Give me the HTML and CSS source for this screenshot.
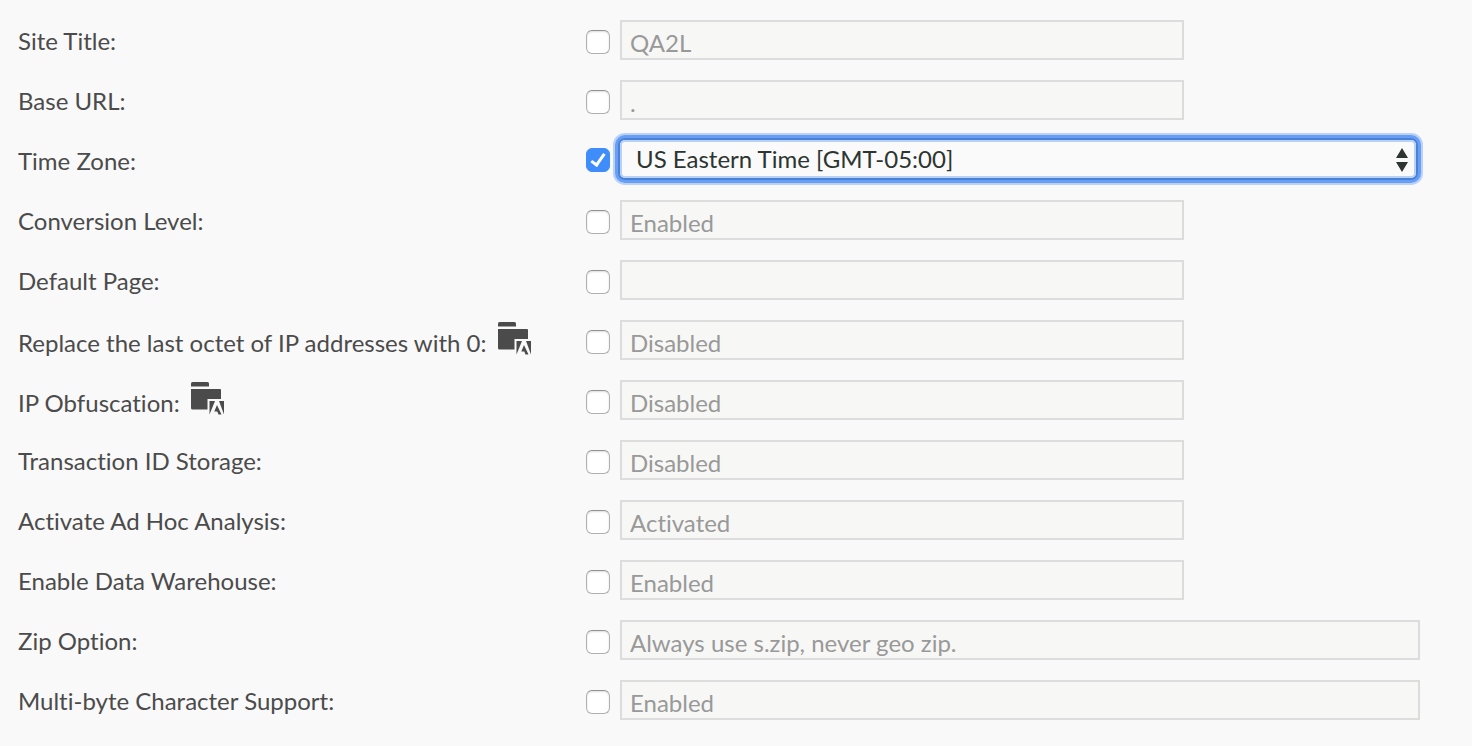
FILE: index.html
```html
<!DOCTYPE html>
<html lang="en">
<head>
    <meta charset="UTF-8">
    <meta name="viewport" content="width=device-width, initial-scale=1.0">
    <title>Report Suite Settings</title>
    <link rel="stylesheet" href="styles.css">
</head>
<body>
    <svg class="symbols">
        <symbol id="folder-icon" viewBox="0 0 34 34">
            <path d="M0 5.500V2.500Q0 1 1.500 1H16.500Q18 1 18 2.500V5.500Z"/>
            <path d="M0 8H29Q30 8 30 9V18H16.500V28.500H1.500Q0 28.500 0 27Z"/>
            <path d="M18.500 20H24L18.500 33.500ZM28 20H33V33.500ZM26 24L30.500 33.500H27.500L26.300 30.500H23.300Z"/>
        </symbol>
    </svg>
    <form class="settings">
        <div class="row">
            <label class="name" for="siteTitle">Site Title:</label>
            <input type="checkbox" aria-label="Edit site title">
            <input type="text" id="siteTitle" value="QA2L" disabled>
        </div>
        <div class="row">
            <label class="name" for="baseUrl">Base URL:</label>
            <input type="checkbox" aria-label="Edit base URL">
            <input type="text" id="baseUrl" value="." disabled>
        </div>
        <div class="row active">
            <label class="name" for="timeZone">Time Zone:</label>
            <input type="checkbox" aria-label="Edit time zone" checked>
            <div class="select">
                <select id="timeZone">
                    <option selected>US Eastern Time [GMT-05:00]</option>
                </select>
                <svg class="arrows" viewBox="0 0 12 24"><path d="M6 0L12 10H0ZM0 14H12L6 24Z"/></svg>
            </div>
        </div>
        <div class="row">
            <label class="name" for="conversion">Conversion Level:</label>
            <input type="checkbox" aria-label="Edit conversion level">
            <input type="text" id="conversion" value="Enabled" disabled>
        </div>
        <div class="row">
            <label class="name" for="defaultPage">Default Page:</label>
            <input type="checkbox" aria-label="Edit default page">
            <input type="text" id="defaultPage" value="" disabled>
        </div>
        <div class="row">
            <label class="name with-icon" for="octet">Replace the last octet of IP addresses with 0:
                <svg class="folder"><use href="#folder-icon"/></svg></label>
            <input type="checkbox" aria-label="Edit last octet">
            <input type="text" id="octet" value="Disabled" disabled>
        </div>
        <div class="row">
            <label class="name with-icon" for="obfuscation">IP Obfuscation:
                <svg class="folder"><use href="#folder-icon"/></svg></label>
            <input type="checkbox" aria-label="Edit IP obfuscation">
            <input type="text" id="obfuscation" value="Disabled" disabled>
        </div>
        <div class="row">
            <label class="name" for="transaction">Transaction ID Storage:</label>
            <input type="checkbox" aria-label="Edit transaction ID storage">
            <input type="text" id="transaction" value="Disabled" disabled>
        </div>
        <div class="row">
            <label class="name" for="adHoc">Activate Ad Hoc Analysis:</label>
            <input type="checkbox" aria-label="Edit ad hoc analysis">
            <input type="text" id="adHoc" value="Activated" disabled>
        </div>
        <div class="row">
            <label class="name" for="warehouse">Enable Data Warehouse:</label>
            <input type="checkbox" aria-label="Edit data warehouse">
            <input type="text" id="warehouse" value="Enabled" disabled>
        </div>
        <div class="row">
            <label class="name" for="zip">Zip Option:</label>
            <input type="checkbox" aria-label="Edit zip option">
            <input type="text" id="zip" class="wide" value="Always use s.zip, never geo zip." disabled>
        </div>
        <div class="row">
            <label class="name" for="multiByte">Multi-byte Character Support:</label>
            <input type="checkbox" aria-label="Edit multi-byte support">
            <input type="text" id="multiByte" class="wide" value="Enabled" disabled>
        </div>
    </form>
</body>
</html>
```
FILE: styles.css
```css
* {
    box-sizing: border-box;
}
body {
    font-family: Lato, "Open Sans", sans-serif;
    font-size: 24px;
    font-variant-ligatures: none;
    color: #4b4b4b;
    background-color: #f9f9f9;
    margin: 0;
}
.symbols {
    display: none;
}
.settings {
    display: flex;
    flex-direction: column;
    gap: 20px;
    padding: 20px 52px 20px 18px;
}
.row {
    display: grid;
    grid-template-columns: 568px 24px minmax(0, 1fr);
    align-items: center;
    height: 40px;
}
.name {
    line-height: 30px;
    padding-top: 2px;
    white-space: nowrap;
}
.with-icon {
    display: flex;
    align-items: center;
    gap: 11px;
    height: 40px;
    padding-top: 6px;
}
.folder {
    flex: none;
    width: 34px;
    height: 34px;
    margin-bottom: 10px;
    fill: #4b4b4b;
}
input[type="checkbox"] {
    appearance: none;
    width: 24px;
    height: 24px;
    margin: 4px 0 0;
    background-color: #fff;
    border: 1px solid #b0b0b0;
    border-top-color: #929292;
    border-radius: 6px;
    box-shadow: inset 0 1px 2px #ddd;
}
input[type="checkbox"]:checked {
    background: #3f8cfb;
    border-color: #3f8cfb;
    box-shadow: none;
}
input[type="checkbox"]:checked::before {
    content: '';
    display: block;
    box-sizing: border-box;
    width: 8px;
    height: 15px;
    margin: 2px 0 0 7px;
    border: solid #fff;
    border-width: 0 3px 3px 0;
    transform: rotate(35deg);
}
input[type="text"] {
    width: 564px;
    max-width: calc(100% - 10px);
    height: 40px;
    margin: 0 0 0 10px;
    padding: 5px 8px 0;
    font: inherit;
    color: #999;
    background-color: #f7f7f5;
    border: 2px solid #dcdcdc;
}
input[type="text"].wide {
    width: 100%;
}
.active input[type="checkbox"] {
    margin-top: 0;
}
.select {
    position: relative;
    margin: 0 4px 2px 10px;
}
select {
    appearance: none;
    display: block;
    width: 100%;
    height: 38px;
    padding: 0 40px 2px 16px;
    font: inherit;
    color: #2c3531;
    background-color: #fafafa;
    border: 0;
    border-radius: 5px;
    outline: none;
    box-shadow: inset 0 0 0 2px #b9d1f6, 0 0 0 2px #4a81d8, 0 0 0 5px #689ff6, 0 0 0 7px #bad2f8;
}
.arrows {
    position: absolute;
    top: 8px;
    right: 8px;
    width: 12px;
    height: 24px;
    fill: #2c3531;
}
```
